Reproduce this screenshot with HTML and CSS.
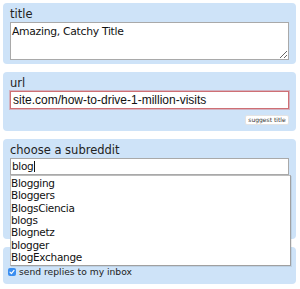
FILE: index.html
```html
<!DOCTYPE HTML>
<html lang="en">
<head>
    <meta charset="utf-8" />
    <title>submit</title>
    <link rel="stylesheet" href="styles.css">
</head>
<body>
    <form class="submit-form">
        <div class="roundfield">
            <span class="field-title">title</span>
            <div class="field-content">
                <textarea class="title-box" rows="2">Amazing, Catchy Title</textarea>
            </div>
        </div>

        <div class="roundfield">
            <span class="field-title">url</span>
            <div class="field-content">
                <input type="text" class="url-box error" value="site.com/how-to-drive-1-million-visits">
                <div class="button-row">
                    <button type="button" class="small-btn">suggest title</button>
                </div>
            </div>
        </div>

        <div class="roundfield sr-field">
            <span class="field-title">choose a subreddit</span>
            <div class="field-content">
                <div class="sr-input"><span>blog</span><span class="caret"></span></div>
                <div class="sr-spacer"></div>
            </div>
            <ul class="sr-dropdown">
                <li>Blogging</li>
                <li>Bloggers</li>
                <li>BlogsCiencia</li>
                <li>blogs</li>
                <li>Blognetz</li>
                <li>blogger</li>
                <li>BlogExchange</li>
            </ul>
        </div>

        <div class="roundfield options">
            <label class="check-row">
                <span class="checkbox">
                    <svg width="8" height="8" viewBox="0 0 8 8"><path d="M2 4.2 L3.4 5.6 L6 2.4" fill="none" stroke="#fff" stroke-width="1.2" stroke-linecap="round" stroke-linejoin="round"/></svg>
                </span>
                <span>send replies to my inbox</span>
            </label>
        </div>
    </form>
</body>
</html>
```

FILE: styles.css
```css
html, body {
    margin: 0;
    background: #fff;
    color: #222;
    font-family: "DejaVu Sans", Verdana, sans-serif;
}

body {
    padding: 3px 4px 0 3px;
}

.roundfield {
    background-color: #cee3f8;
    border-radius: 4px;
    padding: 4px 7px 4px 7px;
    margin-bottom: 8px;
}

.field-title {
    display: block;
    font-size: 11.5px;
    line-height: 15px;
    height: 15px;
}

.title-box {
    display: block;
    box-sizing: border-box;
    width: 100%;
    height: 38px;
    margin: 0;
    padding: 2px 1px;
    border: 1px solid #a9a9a9;
    border-radius: 0;
    font-family: "DejaVu Sans", Verdana, sans-serif;
    font-size: 10.8px;
    letter-spacing: -0.3px;
    color: #111;
    resize: vertical;
}

.url-box {
    display: block;
    box-sizing: border-box;
    width: 100%;
    height: 18px;
    margin: 0;
    padding: 0 2px;
    font-family: "Liberation Sans", Arial, sans-serif;
    font-size: 12px;
    color: #111;
    background: #fff;
    border: 1px solid #cf6f74;
    box-shadow: 0 0 0 1px rgba(214, 120, 126, 0.45);
    outline: none;
}

.button-row {
    display: flex;
    justify-content: flex-end;
    padding: 6px 0 2px 0;
}

.small-btn {
    height: 10px;
    width: 44px;
    padding: 0;
    margin: 0;
    background: #fff;
    border: 1px solid #e3e3e3;
    border-radius: 2px;
    font-family: "DejaVu Sans", Verdana, sans-serif;
    font-size: 6px;
    line-height: 8px;
    color: #333;
}

.sr-field {
    position: relative;
}

.sr-input {
    box-sizing: border-box;
    height: 17px;
    background: #fff;
    border: 1px solid #a9a9a9;
    padding: 0 1px;
    font-size: 10.5px;
    letter-spacing: -0.3px;
    line-height: 15px;
    color: #111;
    display: flex;
    align-items: center;
}

.caret {
    display: inline-block;
    width: 1px;
    height: 11px;
    background: #111;
    margin-left: 1px;
}

.sr-spacer {
    height: 60px;
}

.sr-dropdown {
    position: absolute;
    top: 36px;
    left: 7px;
    width: 279px;
    margin: 0;
    padding: 1px 0 2px 0;
    list-style: none;
    background: #fff;
    border: 1px solid #bdbdbd;
    border-right-color: #a0a0a0;
    border-bottom-color: #a0a0a0;
    box-shadow: 1px 1px 0 rgba(0, 0, 0, 0.08);
    font-size: 10.5px;
    letter-spacing: -0.3px;
    line-height: 12.33px;
    color: #111;
    z-index: 2;
}

.options {
    padding: 19px 5px 6px 5px;
}

.check-row {
    display: flex;
    align-items: center;
    gap: 3px;
    font-size: 9.2px;
    line-height: 12px;
    color: #222;
}

.checkbox {
    display: inline-flex;
    align-items: center;
    justify-content: center;
    width: 8px;
    height: 8px;
    border-radius: 2px;
    background: #3a8ef0;
}
```
